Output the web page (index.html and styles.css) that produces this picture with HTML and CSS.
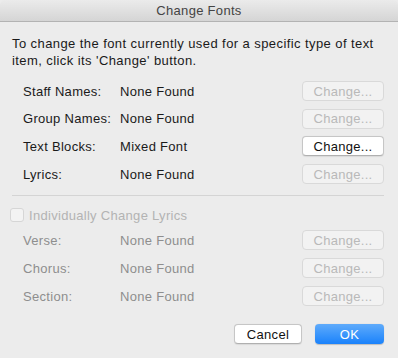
FILE: index.html
```html
<!DOCTYPE html>
<html lang="en">
<head>
    <meta charset="UTF-8">
    <title>Change Fonts</title>
    <link rel="stylesheet" href="styles.css">
</head>
<body>
    <div class="window">
        <div class="titlebar">Change Fonts</div>

        <div class="content">
            <p class="intro">To change the font currently used for a specific type of text item, click its 'Change' button.</p>

            <div class="rows">
                <div class="row">
                    <span class="label">Staff Names:</span>
                    <span class="value">None Found</span>
                    <button class="btn" disabled>Change...</button>
                </div>
                <div class="row">
                    <span class="label">Group Names:</span>
                    <span class="value">None Found</span>
                    <button class="btn" disabled>Change...</button>
                </div>
                <div class="row">
                    <span class="label">Text Blocks:</span>
                    <span class="value">Mixed Font</span>
                    <button class="btn">Change...</button>
                </div>
                <div class="row">
                    <span class="label">Lyrics:</span>
                    <span class="value">None Found</span>
                    <button class="btn" disabled>Change...</button>
                </div>
            </div>

            <hr class="separator">

            <label class="check disabled">
                <span class="box"></span>
                Individually Change Lyrics
            </label>

            <div class="rows lyric-rows disabled">
                <div class="row">
                    <span class="label">Verse:</span>
                    <span class="value">None Found</span>
                    <button class="btn" disabled>Change...</button>
                </div>
                <div class="row">
                    <span class="label">Chorus:</span>
                    <span class="value">None Found</span>
                    <button class="btn" disabled>Change...</button>
                </div>
                <div class="row">
                    <span class="label">Section:</span>
                    <span class="value">None Found</span>
                    <button class="btn" disabled>Change...</button>
                </div>
            </div>

            <div class="actions">
                <button class="btn cancel">Cancel</button>
                <button class="btn primary">OK</button>
            </div>
        </div>
    </div>
</body>
</html>
```

FILE: styles.css
```css
:root {
    --background: #ececec;
    --text: #1a1a1a;
    --muted: #a8a8a8;
    --border: #c6c6c6;
}

* {
    margin: 0;
    padding: 0;
    box-sizing: border-box;
}

body {
    font-family: 'Liberation Sans', Arial, sans-serif;
    font-size: 13px;
    letter-spacing: 0.3px;
    color: var(--text);
    background: var(--background);
    width: 398px;
    height: 358px;
    overflow: hidden;
}

.window {
    height: 358px;
    background: var(--background);
    border-radius: 5px 5px 0 0;
}

.titlebar {
    height: 22px;
    line-height: 21px;
    text-align: center;
    color: #444;
    background: linear-gradient(#ebebeb, #d5d5d5);
    border-bottom: 1px solid #b3b3b3;
    border-radius: 5px 5px 0 0;
}

.content {
    padding: 13px 14px 0 12px;
}

.intro {
    line-height: 17px;
    width: 372px;
    letter-spacing: 0.42px;
}

.rows {
    display: flex;
    flex-direction: column;
    gap: 7.7px;
    margin-top: 12px;
}

.row {
    display: flex;
    align-items: center;
    height: 20px;
    padding-left: 11px;
}

.label {
    width: 97px;
}

.value {
    flex: 1;
}

.btn {
    font-family: inherit;
    font-size: 13px;
    letter-spacing: 0.3px;
    color: #111;
    width: 82px;
    height: 20px;
    background: #fff;
    border: 1px solid var(--border);
    border-bottom-color: #b0b0b0;
    border-radius: 4px;
    box-shadow: 0 0.5px 1px rgba(0,0,0,0.08);
}

.btn:disabled {
    color: #b9b9b9;
    background: #f2f2f2;
    border-color: #d9d9d9;
    box-shadow: none;
}

.separator {
    border: none;
    border-top: 1px solid #d4d4d4;
    margin: 11px 0 0 0;
}

.check {
    display: flex;
    align-items: center;
    gap: 5px;
    height: 16px;
    margin-top: 11px;
    margin-left: -2px;
}

.check.disabled {
    color: #b3b3b3;
}

.box {
    width: 14px;
    height: 14px;
    border: 1px solid #d6d6d6;
    border-radius: 3px;
    background: #f3f3f3;
}

.lyric-rows {
    margin-top: 7px;
    gap: 8px;
}

.lyric-rows.disabled .label,
.lyric-rows.disabled .value {
    color: #8e8e8e;
}

.actions {
    display: flex;
    justify-content: flex-end;
    gap: 13px;
    margin-top: 18px;
}

.cancel {
    width: 68px;
}

.primary {
    width: 69px;
    color: #fff;
    border: none;
    background: linear-gradient(#5fabfb, #1a82fb);
    box-shadow: 0 0.5px 1px rgba(0,0,0,0.2);
}
```
